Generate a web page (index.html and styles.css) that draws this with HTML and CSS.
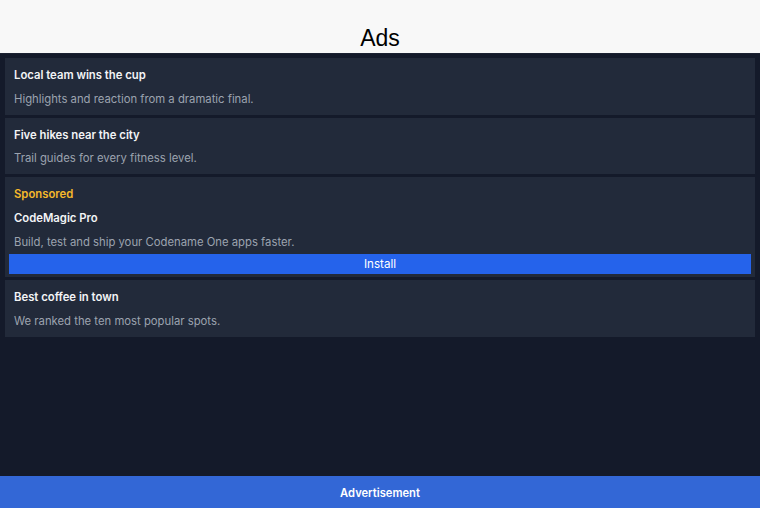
FILE: index.html
```html
<!DOCTYPE html>
<html lang="en">
<head>
<meta charset="utf-8">
<title>Ads</title>
<link rel="stylesheet" href="styles.css">
</head>
<body>
<div class="app">
  <header class="header"><h1 class="title">Ads</h1></header>
  <main class="list">
    <section class="card">
      <div class="card-title">Local team wins the cup</div>
      <div class="card-desc">Highlights and reaction from a dramatic final.</div>
    </section>
    <section class="card">
      <div class="card-title">Five hikes near the city</div>
      <div class="card-desc">Trail guides for every fitness level.</div>
    </section>
    <section class="card">
      <div class="card-tag">Sponsored</div>
      <div class="card-title">CodeMagic Pro</div>
      <div class="card-desc">Build, test and ship your Codename One apps faster.</div>
      <button class="install">Install</button>
    </section>
    <section class="card">
      <div class="card-title">Best coffee in town</div>
      <div class="card-desc">We ranked the ten most popular spots.</div>
    </section>
  </main>
  <footer class="footer">Advertisement</footer>
</div>
</body>
</html>
```
FILE: styles.css
```css
html, body {
  margin: 0;
  padding: 0;
  height: 100%;
}
body {
  background: #141a2a;
  font-family: "Inter", "Noto Sans", sans-serif;
}
.app {
  display: flex;
  flex-direction: column;
  height: 100vh;
}
.header {
  background: #f8f8f8;
  height: 53px;
  border-bottom: 1px solid #1c2232;
  display: flex;
  align-items: center;
  justify-content: center;
  flex: none;
}
.title {
  margin: 0;
  padding-top: 23px;
  font-family: "Liberation Sans", Arial, sans-serif;
  font-weight: normal;
  font-size: 23px;
  color: #000;
}
.list {
  flex: 1;
  display: flex;
  flex-direction: column;
  gap: 3px;
  padding: 4px 5px 0 5px;
}
.card {
  background: #222a3a;
  padding: 6px 4px 3px 4px;
  display: flex;
  flex-direction: column;
}
.card-title, .card-desc, .card-tag {
  padding: 0 5px;
  line-height: 23.75px;
  font-size: 11.3px;
}
.card-title {
  color: #f3f4f6;
  font-weight: 600;
}
.card-desc {
  color: #9ca3af;
}
.card-tag {
  color: #f5b82a;
  font-weight: 600;
}
.install {
  height: 20px;
  border: none;
  margin: 0;
  padding: 0;
  background: #2563eb;
  color: #fff;
  font-family: "Inter", "Noto Sans", sans-serif;
  font-size: 11.6px;
}
.footer {
  flex: none;
  height: 32px;
  box-sizing: border-box;
  padding-top: 2px;
  background: #3367d6;
  color: #fff;
  font-size: 11.2px;
  font-weight: 600;
  display: flex;
  align-items: center;
  justify-content: center;
}
```
